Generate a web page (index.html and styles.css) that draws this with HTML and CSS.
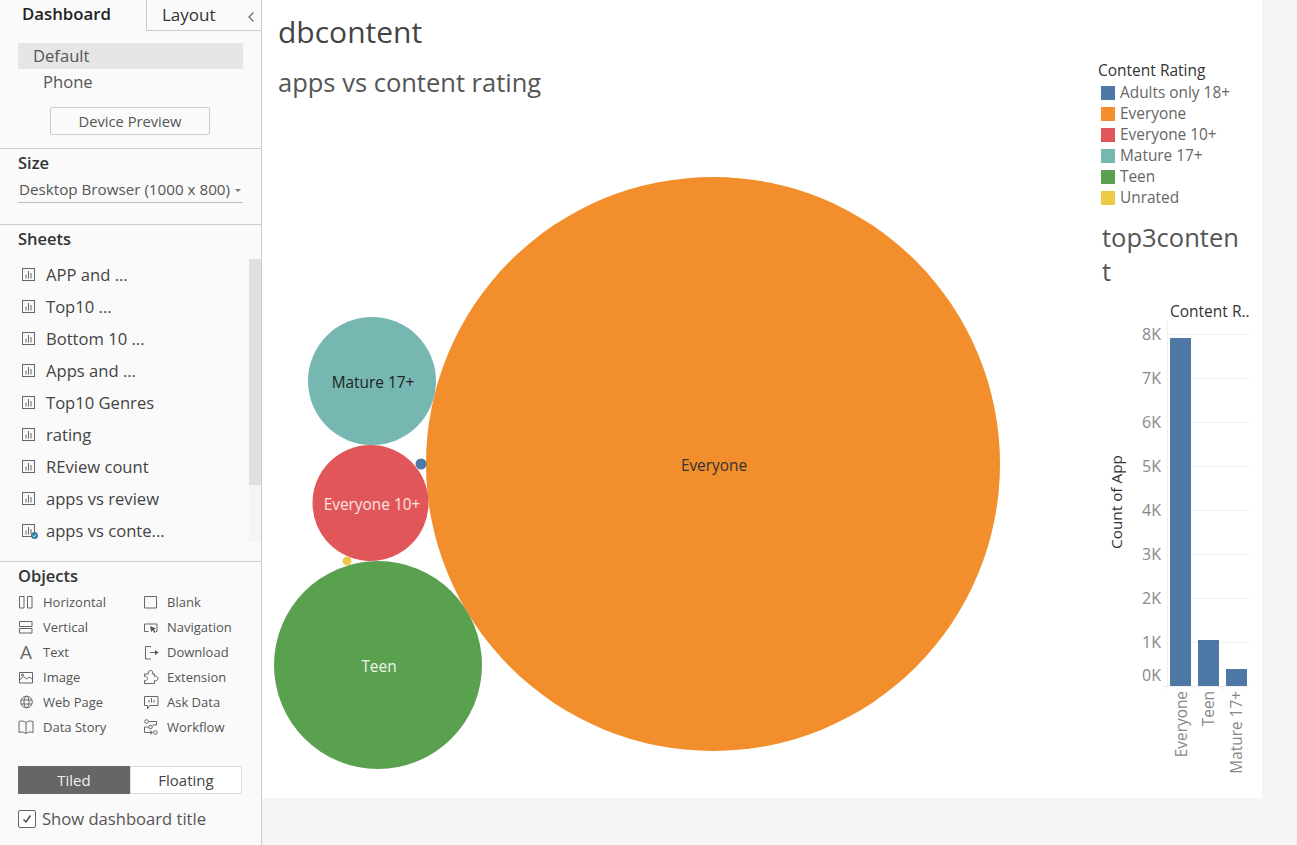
FILE: index.html
```html
<!DOCTYPE html>
<html lang="en">
<head>
    <meta charset="UTF-8">
    <meta name="viewport" content="width=device-width, initial-scale=1.0">
    <title>dbcontent</title>
    <link rel="stylesheet" href="styles.css">
</head>
<body>
    <svg class="defs" width="0" height="0">
        <symbol id="sheet" viewBox="0 0 14 14">
            <rect x="1.500" y="1.500" width="12" height="12" fill="none" stroke="#666"/>
            <path d="M5 7.500v4M7.500 4v7.500M10 6v5.500" fill="none" stroke="#666"/>
        </symbol>
    </svg>

    <aside class="sidebar">
        <div class="tabs">
            <div class="tab tab-active">Dashboard</div>
            <div class="tab tab-other">Layout <span class="chevron">
                <svg width="8" height="12" viewBox="0 0 8 12"><path d="M6.500 1.500 2 6l4.500 4.500" fill="none" stroke="#666" stroke-width="1.200"/></svg>
            </span></div>
        </div>

        <section class="device">
            <div class="device-row device-default">Default</div>
            <div class="device-row device-phone">Phone</div>
            <button class="preview-btn">Device Preview</button>
        </section>

        <section class="size">
            <h2>Size</h2>
            <div class="size-select">Desktop Browser (1000 x 800)<span class="caret"></span></div>
        </section>

        <section class="sheets">
            <h2>Sheets</h2>
            <div class="sheet-wrap">
                <ul class="sheet-list">
                    <li><svg class="sheet-icon"><use href="#sheet"/></svg>APP and ...</li>
                    <li><svg class="sheet-icon"><use href="#sheet"/></svg>Top10 ...</li>
                    <li><svg class="sheet-icon"><use href="#sheet"/></svg>Bottom 10 ...</li>
                    <li><svg class="sheet-icon"><use href="#sheet"/></svg>Apps and ...</li>
                    <li><svg class="sheet-icon"><use href="#sheet"/></svg>Top10 Genres</li>
                    <li><svg class="sheet-icon"><use href="#sheet"/></svg>rating</li>
                    <li><svg class="sheet-icon"><use href="#sheet"/></svg>REview count</li>
                    <li><svg class="sheet-icon"><use href="#sheet"/></svg>apps vs review</li>
                    <li>
                        <span class="sheet-used">
                            <svg class="sheet-icon"><use href="#sheet"/></svg>
                            <svg class="used-badge" viewBox="0 0 8 8"><circle cx="4" cy="4" r="4" fill="#2f7ea3"/><path d="M2 4l1.500 1.500L6 2.800" fill="none" stroke="#fff"/></svg>
                        </span>apps vs conte...
                    </li>
                </ul>
                <div class="scrollbar"><div class="scroll-thumb"></div></div>
            </div>
        </section>

        <section class="objects">
            <h2>Objects</h2>
            <div class="object-grid">
                <div class="object">
                    <svg viewBox="0 0 16 16"><path d="M1.500 2.500h4.500v11.500h-4.500zM9.500 2.500h4.500v11.500h-4.500z"/></svg>Horizontal
                </div>
                <div class="object object-right">
                    <svg viewBox="0 0 16 16"><path d="M1.500 2.500h12v11.500h-12z"/></svg>Blank
                </div>
                <div class="object">
                    <svg viewBox="0 0 16 16"><path d="M1.500 2.500h12.500v5h-12.500zM1.500 9.500h12.500v4.500h-12.500z"/></svg>Vertical
                </div>
                <div class="object object-right">
                    <svg viewBox="0 0 16 16"><path d="M5.500 12.500H1.500v-7.500h12.500v7.500h-1"/><path class="solid" d="M7 7l6 2.500-2.300 1 2 2.500-1.200 1-1.800-2.700-1.500 1.700z"/></svg>Navigation
                </div>
                <div class="object">
                    <svg viewBox="0 0 16 16"><text class="glyph" x="8" y="15">A</text></svg>Text
                </div>
                <div class="object object-right">
                    <svg viewBox="0 0 16 16"><path d="M8 2.500H2.500v12.500H8M7 8.500h6"/><path class="solid" d="M12 6l3.500 2.500L12 11z"/></svg>Download
                </div>
                <div class="object">
                    <svg viewBox="0 0 16 16"><path d="M1.500 3.500h13v10.500h-13zM1.500 11l4-3.500 3 2.500 2.500-2 4 2.500"/><circle cx="4.500" cy="6" r="1"/></svg>Image
                </div>
                <div class="object object-right">
                    <svg viewBox="0 0 16 16"><path d="M1.500 5H5.500C5 4 5 1.500 7.500 1.500S10 4 9.500 5H11.500V7.500C12.500 7 15 7 15 9.500S12.500 12 11.500 11.500V14.500H1.500V11.500C3 12 4.500 11 4.500 9.500S3 7 1.500 7.500z"/></svg>Extension
                </div>
                <div class="object">
                    <svg viewBox="0 0 16 16"><circle cx="8.500" cy="8" r="5.800"/><ellipse cx="8.500" cy="8" rx="2.500" ry="5.800"/><path d="M3 6h11M3 10h11"/></svg>Web Page
                </div>
                <div class="object object-right">
                    <svg viewBox="0 0 16 16"><path d="M1.500 2.500h13.500v9H6.500L4.500 15v-3.500h-3z"/><path d="M6 8.500V6M8.500 8.500V4M11 8.500V6"/></svg>Ask Data
                </div>
                <div class="object">
                    <svg viewBox="0 0 16 16"><path d="M8 3.500C6 2 3.500 1.500 1 2.500v11c2.500-1 5-.5 7 1 2-1.500 4.500-2 7-1V2.500c-2.500-1-5-.5-7 1zM8 3.500v11"/></svg>Data Story
                </div>
                <div class="object object-right">
                    <svg viewBox="0 0 16 16"><circle cx="3.500" cy="2.500" r="1.800"/><circle cx="7.500" cy="8" r="1.800"/><circle cx="12.500" cy="13.500" r="1.800"/><path d="M6 2.500h7.500v3.500h-4M5.500 8H1.500v5.500h8M7 11.500l2.500 2-2.500 2"/></svg>Workflow
                </div>
            </div>
            <div class="layout-toggle">
                <div class="toggle-on">Tiled</div>
                <div class="toggle-off">Floating</div>
            </div>
            <label class="show-title">
                <span class="checkbox">
                    <svg width="12" height="12" viewBox="0 0 12 12"><path d="M2.500 6.500 5 9l4.500-6.500" fill="none" stroke="#444" stroke-width="1.400"/></svg>
                </span>
                Show dashboard title
            </label>
        </section>
    </aside>

    <main class="main">
        <div class="canvas">
            <div class="left-col">
                <h1 class="dash-title">dbcontent</h1>
                <h2 class="viz-title">apps vs content rating</h2>
                <svg class="bubbles" width="826" height="688" viewBox="262 110 826 688">
                    <circle cx="713" cy="464" r="287" fill="#f28e2b"/>
                    <circle cx="372" cy="381" r="64" fill="#76b7b2"/>
                    <circle cx="370.500" cy="503" r="58" fill="#e15759"/>
                    <circle cx="378" cy="665" r="104" fill="#59a14f"/>
                    <circle cx="421" cy="464" r="5.500" fill="#4e79a7"/>
                    <circle cx="347" cy="561" r="4.500" fill="#edc948"/>
                    <text class="bubble-label" x="714" y="470.500" fill="#333">Everyone</text>
                    <text class="bubble-label" x="373" y="387.500" fill="#222">Mature 17+</text>
                    <text class="bubble-label" x="372" y="509.500" fill="#fbe3e3">Everyone 10+</text>
                    <text class="bubble-label" x="379" y="671.500" fill="#eef5ec">Teen</text>
                </svg>
            </div>

            <div class="right-col">
                <div class="legend">
                    <div class="legend-title">Content Rating</div>
                    <div class="legend-row"><span class="swatch swatch-blue"></span>Adults only 18+</div>
                    <div class="legend-row"><span class="swatch swatch-orange"></span>Everyone</div>
                    <div class="legend-row"><span class="swatch swatch-red"></span>Everyone 10+</div>
                    <div class="legend-row"><span class="swatch swatch-teal"></span>Mature 17+</div>
                    <div class="legend-row"><span class="swatch swatch-green"></span>Teen</div>
                    <div class="legend-row"><span class="swatch swatch-yellow"></span>Unrated</div>
                </div>
                <div class="bar-title">top3content</div>
                <svg class="bars" width="174" height="498" viewBox="1088 300 174 498">
                    <g class="grid">
                        <path d="M1167 334.500h83M1167 378.500h83M1167 422.500h83M1167 466.500h83M1167 510.500h83M1167 554.500h83M1167 598.500h83M1167 642.500h83M1162 686.500h88"/>
                        <path d="M1167.500 321v369M1194.500 686v5M1222.500 686v5"/>
                    </g>
                    <text class="bar-head" x="1170" y="317">Content R..</text>
                    <text class="axis-title" transform="translate(1122 502) rotate(-90)">Count of App</text>
                    <g class="tick-labels">
                        <text x="1161" y="340">8K</text>
                        <text x="1161" y="384">7K</text>
                        <text x="1161" y="428">6K</text>
                        <text x="1161" y="472">5K</text>
                        <text x="1161" y="516">4K</text>
                        <text x="1161" y="560">3K</text>
                        <text x="1161" y="604">2K</text>
                        <text x="1161" y="648">1K</text>
                        <text x="1161" y="681">0K</text>
                    </g>
                    <rect class="bar" x="1170" y="338" width="21" height="348"/>
                    <rect class="bar" x="1198" y="640" width="21" height="46"/>
                    <rect class="bar" x="1226" y="669" width="21" height="17"/>
                    <g class="cat-labels">
                        <text transform="translate(1187 691) rotate(-90)">Everyone</text>
                        <text transform="translate(1214 691) rotate(-90)">Teen</text>
                        <text transform="translate(1242 691) rotate(-90)">Mature 17+</text>
                    </g>
                </svg>
            </div>
        </div>
    </main>
</body>
</html>
```

FILE: styles.css
```css
* {
    box-sizing: border-box;
}

body {
    font-family: "Open Sans", sans-serif;
    margin: 0;
    width: 1297px;
    height: 845px;
    overflow: hidden;
    display: flex;
    background-color: #f5f5f5;
    color: #444;
}

.defs {
    position: absolute;
}

h1, h2 {
    margin: 0;
    font-weight: normal;
}

/* sidebar */

.sidebar {
    width: 262px;
    height: 845px;
    flex-shrink: 0;
    background-color: #fafafa;
    border-right: 1px solid #ccc;
    display: flex;
    flex-direction: column;
}

.sidebar h2 {
    font-size: 16.500px;
    line-height: 22px;
    font-weight: 600;
    color: #333;
    padding-left: 18px;
}

.tabs {
    display: flex;
    height: 31px;
}

.tab {
    font-size: 17px;
    line-height: 29px;
}

.tab-active {
    width: 146px;
    padding-left: 22px;
    font-size: 16.800px;
    line-height: 27px;
    font-weight: 600;
    color: #222;
}

.tab-other {
    flex: 1;
    padding-left: 15px;
    color: #333;
    border-left: 1px solid #ccc;
    border-bottom: 1px solid #ccc;
    display: flex;
    justify-content: space-between;
}

.chevron {
    padding-right: 6px;
    padding-top: 2px;
}

.device {
    height: 118px;
    padding: 12px 18px 0;
    border-bottom: 1px solid #ccc;
}

.device-row {
    font-size: 16.600px;
    line-height: 26px;
    color: #555;
}

.device-default {
    width: 225px;
    background-color: #e6e6e6;
    padding-left: 15px;
}

.device-phone {
    padding-left: 25px;
}

.preview-btn {
    display: block;
    width: 160px;
    height: 28px;
    margin: 12px 0 0 32px;
    padding: 0;
    background-color: #fafafa;
    border: 1px solid #ccc;
    border-radius: 2px;
    font-family: inherit;
    font-size: 14.700px;
    color: #555;
}

.size {
    height: 76px;
    padding-top: 3px;
    border-bottom: 1px solid #ccc;
}

.size-select {
    width: 225px;
    margin: 4px 0 0 18px;
    padding: 0 0 2px 1px;
    font-size: 15.200px;
    line-height: 22px;
    color: #555;
    border-bottom: 1px solid #bbb;
    white-space: nowrap;
}

.caret {
    display: inline-block;
    vertical-align: middle;
    margin-left: 5px;
    border-left: 3px solid transparent;
    border-right: 3px solid transparent;
    border-top: 3px solid #777;
}

.sheets {
    height: 337px;
    padding-top: 3px;
    border-bottom: 1px solid #ccc;
}

.sheet-wrap {
    display: flex;
    justify-content: space-between;
    margin-top: 9px;
}

.sheet-list {
    list-style: none;
    margin: -1px 0 0;
    padding: 0 0 0 21px;
}

.sheet-list li {
    height: 32px;
    display: flex;
    align-items: center;
    font-size: 16.600px;
    color: #444;
}

.sheet-icon {
    width: 14px;
    height: 14px;
    margin-right: 11px;
    flex-shrink: 0;
}

.sheet-used {
    position: relative;
    display: flex;
}

.used-badge {
    position: absolute;
    left: 10px;
    top: 9px;
    width: 7px;
    height: 7px;
}

.scrollbar {
    width: 12px;
    height: 283px;
    background-color: #f5f5f5;
}

.scroll-thumb {
    height: 226px;
    background-color: #e0e0e0;
}

.objects {
    flex: 1;
    padding-top: 3px;
}

.object-grid {
    display: grid;
    grid-template-columns: 125px 1fr;
    grid-auto-rows: 25px;
    margin: 2px 0 0 18px;
}

.object {
    display: flex;
    align-items: center;
    gap: 9px;
    font-size: 13px;
    color: #555;
}

.object-right {
    gap: 8px;
}

.object svg {
    width: 16px;
    height: 16px;
    fill: none;
    stroke: #666;
    stroke-width: 1;
    flex-shrink: 0;
    overflow: visible;
}

.object svg .solid {
    fill: #555;
    stroke: none;
}

.object svg .glyph {
    font-size: 19px;
    fill: #666;
    stroke: none;
    text-anchor: middle;
}

.layout-toggle {
    display: flex;
    width: 224px;
    height: 28px;
    margin: 27px 0 0 18px;
    font-size: 15px;
    line-height: 28px;
    text-align: center;
}

.toggle-on {
    width: 112px;
    background-color: #666;
    color: #eee;
}

.toggle-off {
    flex: 1;
    background-color: #fff;
    border: 1px solid #ddd;
    line-height: 26px;
    color: #444;
}

.show-title {
    display: flex;
    align-items: center;
    gap: 6px;
    margin: 13px 0 0 18px;
    font-size: 16.600px;
    color: #555;
}

.checkbox {
    width: 18px;
    height: 18px;
    display: flex;
    align-items: center;
    justify-content: center;
    border: 1px solid #666;
    border-radius: 2px;
    background-color: #fff;
}

/* dashboard canvas */

.main {
    flex: 1;
}

.canvas {
    width: 1000px;
    height: 798px;
    background-color: #fff;
    display: flex;
}

.left-col {
    width: 826px;
    display: flex;
    flex-direction: column;
}

.dash-title {
    height: 60px;
    padding: 12px 0 0 16px;
    font-size: 30px;
    line-height: 40px;
    color: #444;
}

.viz-title {
    height: 50px;
    padding: 5px 0 0 16px;
    font-size: 25.500px;
    line-height: 34px;
    color: #555;
}

.bubbles {
    display: block;
}

.bubble-label {
    font-size: 15.400px;
    text-anchor: middle;
}

.right-col {
    width: 174px;
    display: flex;
    flex-direction: column;
}

.legend {
    padding: 60px 0 0 10px;
}

.legend-title {
    height: 22px;
    font-size: 15.500px;
    line-height: 21px;
    color: #333;
}

.legend-row {
    display: flex;
    align-items: center;
    height: 21px;
    padding-left: 3px;
    font-size: 15.400px;
    color: #666;
}

.swatch {
    width: 14px;
    height: 14px;
    margin-right: 5px;
}

.swatch-blue { background-color: #4e79a7; }
.swatch-orange { background-color: #f28e2b; }
.swatch-red { background-color: #e15759; }
.swatch-teal { background-color: #76b7b2; }
.swatch-green { background-color: #59a14f; }
.swatch-yellow { background-color: #edc948; }

.bar-title {
    width: 140px;
    height: 68px;
    margin: 12px 0 0 14px;
    font-size: 25.500px;
    line-height: 34px;
    color: #555;
    word-break: break-all;
}

.bars {
    display: block;
    margin-top: 12px;
}

.grid path {
    fill: none;
    stroke: #f0f0f0;
}

.bar {
    fill: #4e79a7;
}

.bar-head {
    font-size: 15.500px;
    fill: #333;
}

.axis-title {
    font-size: 15.300px;
    fill: #333;
    text-anchor: middle;
}

.tick-labels text {
    font-size: 16px;
    fill: #888;
    text-anchor: end;
}

.cat-labels text {
    font-size: 15.400px;
    fill: #888;
    text-anchor: end;
}
```
